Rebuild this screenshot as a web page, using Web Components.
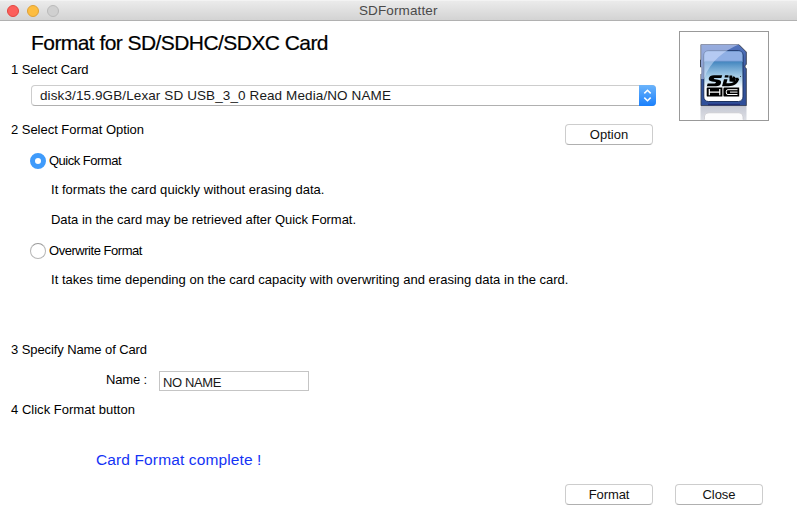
<!DOCTYPE html>
<html lang="en">
<head>
<meta charset="utf-8">
<title>SDFormatter</title>
<style>
body { margin: 0; background: #fff; color: #000; font: 13px/19px "Liberation Sans", Arial, sans-serif; }
</style>
</head>
<body>
<sd-window></sd-window>
<script>
const define = (name, html, setup) => {
  const template = document.createElement('template');
  template.innerHTML = html;
  customElements.define(name, class extends HTMLElement {
    connectedCallback() {
      if (this.shadowRoot) return;
      this.attachShadow({ mode: 'open' }).append(template.content.cloneNode(true));
      if (setup) setup(this);
    }
  });
};

// A single line of text whose tracking is set so that it spans `span` pixels.
define('ui-text', `<style>:host{display:inline-block;white-space:pre;flex:none}</style><slot></slot>`, el => {
  const span = parseFloat(el.getAttribute('span'));
  if (!span) return;
  const natural = el.getBoundingClientRect().width;
  el.style.letterSpacing = ((span - natural) / el.textContent.length).toFixed(4) + 'px';
});

define('ui-titlebar', `<style>
:host{display:flex;box-sizing:border-box;height:21px;padding:0 7px;align-items:center;background:linear-gradient(#ebebeb,#d3d3d3);border-bottom:1px solid #b1b1b1;border-top:1px solid #f3f3f3;color:#4a4a4a;font-size:13.5px}
.lights{display:flex;gap:8px;width:352px}
i{box-sizing:border-box;width:12px;height:12px;border-radius:50%;border:1px solid #e2463f;background:#fc5f5b}
i:nth-child(2){background:#fdbd40;border-color:#e0a135}
i:nth-child(3){background:#d0d0d0;border-color:#bababa}
</style><div class="lights"><i></i><i></i><i></i></div><slot></slot>`);

define('ui-button', `<style>
:host{display:flex;box-sizing:border-box;width:88px;height:21px;flex:none;justify-content:center;border:1px solid #cdcdcd;border-bottom-color:#b0b0b0;border-radius:4px;background:#fff;color:#111;line-height:19px}
</style><slot></slot>`);

define('ui-select', `<style>
:host{display:flex;box-sizing:border-box;width:625px;height:21px;border:1px solid #cdcdcd;border-bottom-color:#b0b0b0;border-radius:4px;padding-left:8px;justify-content:space-between;color:#1a1a1a;font-size:13.5px;line-height:19px}
svg{flex:none;margin:-1px}
</style><slot></slot>
<svg width="17" height="21" viewBox="0 0 17 21"><defs><linearGradient id="b" x2="0" y2="1"><stop stop-color="#6cb4fb"/><stop offset="1" stop-color="#1a80fc"/></linearGradient></defs><path d="M0 0H13Q17 0 17 4V17Q17 21 13 21H0Z" fill="url(#b)"/><path d="M5.3 8.4 8.5 5.2l3.2 3.2M5.3 12.6l3.2 3.2 3.2-3.2" fill="none" stroke="#fff" stroke-width="1.5"/></svg>`);

define('ui-radio', `<style>
:host{display:flex;height:20px;align-items:center;gap:3px;margin-left:30px}
i{box-sizing:border-box;width:16px;height:16px;border-radius:50%;border:1px solid #b6b6b6;border-top-color:#999;background:#fff}
:host([checked]) i{border:5px solid #3f9bfb}
::slotted(*){height:20px}
</style><i></i><slot></slot>`);

define('ui-field', `<style>
:host{display:block;box-sizing:border-box;width:150px;height:20px;border:1px solid #c5c5c5;padding:1px 0 0 3px;color:#1a1a1a}
</style><slot></slot>`);

define('sd-card-picture', `<style>
:host{display:block;box-sizing:border-box;width:90px;height:90px;border:1px solid #999}
svg{display:block;margin:-1px}
</style>
<svg width="90" height="90" viewBox="0 0 90 90">
<defs>
<linearGradient id="body" x2="0" y2="1"><stop stop-color="#5374bd"/><stop offset=".5" stop-color="#36569f"/><stop offset="1" stop-color="#2f4f9a"/></linearGradient>
<linearGradient id="label" x2="0" y2="1"><stop offset=".2" stop-color="#3f83bd"/><stop offset=".55" stop-color="#b6d8ee"/><stop offset=".75" stop-color="#fff"/></linearGradient>
<linearGradient id="mirror" x2="0" y2="1"><stop stop-color="#c6c9d4"/><stop offset="1" stop-color="#dddfe5"/></linearGradient>
<clipPath id="clip"><path d="M22 13H60L68 21V75H22Z"/></clipPath>
</defs>
<path d="M21.5 75.5H67.5V89H21.5Z" fill="url(#mirror)"/>
<path d="M25.5 89V85Q26 81.8 30 81.8H60Q64 82 64 86V89Z" fill="#fcfcfd"/>
<path d="M25.5 88.5V85Q26 81.8 30 81.8H60Q64 82 64 86V88.5" fill="none" stroke="#c5c6cb" stroke-width=".7"/>
<path d="M22 13.5H59.8L67.3 21V33.5L66 34.5V36.5L67.3 37.5V74.7H22V43H22.8V36H21.5V29H22Z" fill="url(#body)" stroke="#343a49" stroke-width=".9"/>
<path d="M29 73.5H61" stroke="#202c75" stroke-width="1.5"/>
<rect x="24.8" y="19.8" width="39.2" height="50.7" rx="4.5" fill="url(#label)" stroke="#1c315e"/>
<path d="M25.3 30.3V24Q25.5 20.3 29 20.3H60Q63.5 20.5 63.5 24V30.3Z" fill="#8fafe4"/>
<path d="M25 30.3H64" stroke="#628fc7" stroke-width=".8"/>
<path d="M22 13H61C46 19 31 30 25 48H22Z" fill="#dce5ff" fill-opacity=".5" clip-path="url(#clip)"/>
<path d="M43.2 44.3H35Q30.6 44.3 29.8 47.3 29.3 50 33 50.5L36.8 51.1Q37.4 52.4 35.5 52.4H28.7L27.8 55.2H37Q41.3 55.2 42 52Q42.6 49.4 39.2 48.8L34.8 48.1Q34.6 47 36 47H42.3Z"/>
<path d="M45 48.2H48.5L47.4 52.3H50C54 52.3 56.5 50.2 57.2 47.8L60.2 48C58.8 53 54.5 55.2 49.5 55.2H43Z"/>
<path d="M46 44.3H49.5V46.5H45.5ZM50.5 44.6H53.2V46.9H50.3ZM54 45.2 56.3 46V48.5L53 47.8ZM57 46.7H59.5V49H57Z"/>
<path d="M50.5 47H57L56 51 50.5 50.5Z"/>
<path d="M28.6 56.6H43.4V65.6H28.6Q27.7 65.6 27.7 64.7V57.5Q27.7 56.6 28.6 56.6ZM44.4 57.8Q44.4 56.6 45.6 56.6H60.2V65.6H45.6Q44.4 65.6 44.4 64.4Z"/>
<path d="M30.3 58V64.2M30.3 61.1H40.8M40.8 58V64.2" fill="none" stroke="#fff" stroke-width="1.2"/>
<path d="M58.5 58.7H49Q47.3 58.7 47.3 60.2V62Q47.3 63.5 49 63.5H58.5M58.5 61.1H51" fill="none" stroke="#fff" stroke-width="1"/>
<path d="M61 45.5H62" stroke="#333" stroke-width=".8"/>
</svg>`);

define('sd-window', `<style>
:host{display:flex;flex-direction:column;width:797px;height:518px;overflow:hidden;background:#fff}
main{display:grid;grid-template-columns:656px 90px;column-gap:23px;align-items:start;padding-top:10px}
.form{display:flex;flex-direction:column;align-items:flex-start;height:453px}
.title{font-size:21px;line-height:24px;margin-left:31px;margin-bottom:5px;-webkit-text-stroke:.2px #000}
.step{margin-left:11px}
.pick{margin:6px 0 14px 31px}
.options{display:flex;width:653px;height:31px;justify-content:space-between}
.options ui-button{margin-top:4px}
.note{margin:9px 0 0 51px}
.note + .note{margin-top:11px}
.note + ui-radio{margin-top:12px}
.three{margin-top:51px}
.name{display:flex;margin:11px 0 9px 106px;gap:12px;align-items:flex-start}
.name ui-field{margin-top:1px}
.done{font-size:15.5px;margin:31px 0 0 96px;color:#1433f5}
footer{display:flex;gap:22px;padding-left:565px}
</style>
<ui-titlebar><ui-text span="78.5">SDFormatter</ui-text></ui-titlebar>
<main>
<div class="form">
<ui-text class="title" span="297">Format for SD/SDHC/SDXC Card</ui-text>
<ui-text class="step" span="77.5">1 Select Card</ui-text>
<ui-select class="pick"><ui-text span="351">disk3/15.9GB/Lexar SD USB_3_0 Read Media/NO NAME</ui-text></ui-select>
<div class="options"><ui-text class="step" span="133">2 Select Format Option</ui-text><ui-button><ui-text span="38.5">Option</ui-text></ui-button></div>
<ui-radio checked><ui-text span="72">Quick Format</ui-text></ui-radio>
<ui-text class="note" span="273.5">It formats the card quickly without erasing data.</ui-text>
<ui-text class="note" span="305">Data in the card may be retrieved after Quick Format.</ui-text>
<ui-radio><ui-text span="93">Overwrite Format</ui-text></ui-radio>
<ui-text class="note" span="517.5">It takes time depending on the card capacity with overwriting and erasing data in the card.</ui-text>
<ui-text class="step three" span="136">3 Specify Name of Card</ui-text>
<div class="name"><ui-text span="41">Name :</ui-text><ui-field><ui-text span="58">NO NAME</ui-text></ui-field></div>
<ui-text class="step" span="124">4 Click Format button</ui-text>
<ui-text class="done" span="165.5">Card Format complete !</ui-text>
</div>
<sd-card-picture></sd-card-picture>
</main>
<footer><ui-button><ui-text span="40.5">Format</ui-text></ui-button><ui-button><ui-text span="33">Close</ui-text></ui-button></footer>`);
</script>
</body>
</html>
